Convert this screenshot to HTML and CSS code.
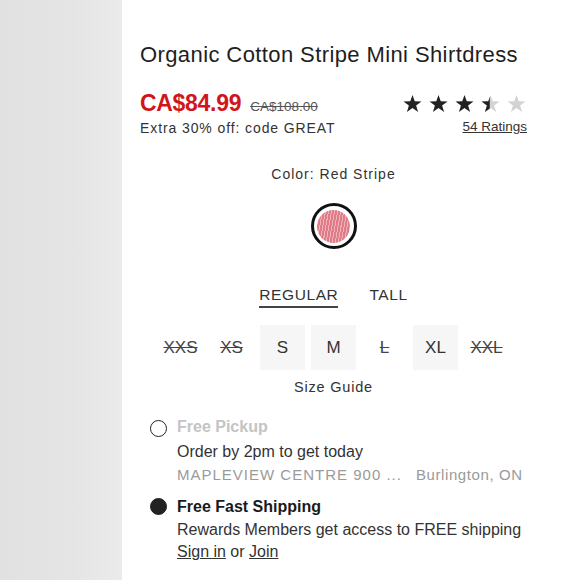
FILE: index.html
```html
<!DOCTYPE html>
<html lang="en">
<head>
<meta charset="utf-8">
<title>Organic Cotton Stripe Mini Shirtdress</title>
<link rel="stylesheet" href="styles.css">
</head>
<body>
<div class="page">
  <aside class="gallery"></aside>
  <main class="details">
    <h1 class="title">Organic Cotton Stripe Mini Shirtdress</h1>
    <div class="price-row">
      <div class="prices">
        <div class="price-line">
          <span class="price">CA$84.99</span>
          <span class="was">CA$108.00</span>
        </div>
        <div class="promo">Extra 30% off: code GREAT</div>
      </div>
      <div class="rating">
        <div class="stars">
          <svg width="124" height="20" viewBox="0 0 124 20">
            <defs>
              <path id="st" d="M9.5 1 L11.75 7.3 L18.5 7.4 L13.1 11.5 L15.1 18 L9.5 14.1 L3.9 18 L5.9 11.5 L0.5 7.4 L7.25 7.3 Z"/>
              <clipPath id="half"><rect x="0" y="0" width="8.8" height="20"/></clipPath>
            </defs>
            <use href="#st" x="0" fill="#222"/>
            <use href="#st" x="26" fill="#222"/>
            <use href="#st" x="52" fill="#222"/>
            <use href="#st" x="78" fill="#d3d3d3"/>
            <g transform="translate(78 0)"><use href="#st" fill="#222" clip-path="url(#half)"/></g>
            <use href="#st" x="104" fill="#d3d3d3"/>
          </svg>
        </div>
        <a class="ratings-link" href="#">54 Ratings</a>
      </div>
    </div>

    <div class="color-label">Color: Red Stripe</div>
    <div class="swatch-wrap">
      <span class="swatch"><span class="swatch-fill"></span></span>
    </div>

    <div class="fits">
      <span class="fit active">REGULAR</span>
      <span class="fit">TALL</span>
    </div>

    <div class="sizes">
      <span class="size na">XXS</span>
      <span class="size na">XS</span>
      <span class="size avail">S</span>
      <span class="size avail">M</span>
      <span class="size na">L</span>
      <span class="size avail">XL</span>
      <span class="size na">XXL</span>
    </div>
    <div class="size-guide">Size Guide</div>

    <div class="options">
      <div class="option">
        <span class="radio"></span>
        <div class="option-text">
          <div class="opt-title disabled">Free Pickup</div>
          <div class="opt-line">Order by 2pm to get today</div>
          <div class="opt-store"><span>MAPLEVIEW CENTRE 900 ...</span><span>Burlington, ON</span></div>
        </div>
      </div>
      <div class="option">
        <span class="radio checked"></span>
        <div class="option-text">
          <div class="opt-title">Free Fast Shipping</div>
          <div class="opt-line">Rewards Members get access to FREE shipping</div>
          <div class="opt-line"><a href="#">Sign in</a> or <a href="#">Join</a></div>
        </div>
      </div>
    </div>
  </main>
</div>
</body>
</html>
```

FILE: styles.css
```css
* { box-sizing: border-box; }
html, body { margin: 0; padding: 0; background: #fff; }
body {
  font-family: "Liberation Sans", Arial, sans-serif;
  color: #222;
  width: 580px;
  height: 580px;
  overflow: hidden;
}
.page {
  display: flex;
  height: 580px;
}
.gallery {
  width: 122px;
  flex: none;
  background: linear-gradient(90deg, #e1e1e1 0%, #e5e5e5 60%, #ebebeb 100%);
}
.details {
  flex: 1;
  padding: 41px 53px 0 18px;
}
.title {
  margin: 0;
  font-size: 22px;
  font-weight: normal;
  line-height: 28px;
  color: #1e1e1e;
  letter-spacing: 0.4px;
}
.price-row {
  display: flex;
  justify-content: space-between;
  margin-top: 21px;
}
.price-line {
  display: flex;
  align-items: baseline;
  gap: 9px;
  height: 27px;
}
.price {
  color: #d0161c;
  font-weight: bold;
  font-size: 23px;
  line-height: 27px;
  letter-spacing: -0.3px;
}
.was {
  color: #555;
  font-size: 13.5px;
  text-decoration: line-through;
}
.promo {
  font-size: 14px;
  line-height: 18px;
  color: #333;
  letter-spacing: 0.9px;
  margin-top: 2px;
}
.rating {
  display: flex;
  flex-direction: column;
  align-items: flex-end;
}
.stars {
  height: 24px;
  padding-top: 4px;
}
.stars svg { display: block; }
.ratings-link {
  margin-top: 4px;
  font-size: 13.5px;
  line-height: 18px;
  color: #333;
  text-decoration: underline;
}
.color-label {
  text-align: center;
  margin-top: 28px;
  font-size: 14px;
  line-height: 18px;
  letter-spacing: 1px;
  color: #333;
}
.swatch-wrap {
  display: flex;
  justify-content: center;
  margin-top: 20px;
}
.swatch {
  width: 46px;
  height: 46px;
  border-radius: 50%;
  border: 3px solid #111;
  display: flex;
  align-items: center;
  justify-content: center;
}
.swatch-fill {
  width: 33px;
  height: 33px;
  border-radius: 50%;
  background:
    repeating-linear-gradient(100deg, #e07c88 0 2px, #f0b3ba 2px 3px);
}
.fits {
  display: flex;
  justify-content: center;
  gap: 31px;
  margin-top: 36px;
  font-size: 15.5px;
  line-height: 19px;
  letter-spacing: 0.6px;
  color: #333;
}
.fit { padding-bottom: 2px; border-bottom: 2px solid transparent; }
.fit.active { border-bottom-color: #444; }
.sizes {
  display: flex;
  justify-content: center;
  gap: 6px;
  margin-top: 17px;
}
.size {
  width: 45px;
  height: 45px;
  display: flex;
  align-items: center;
  justify-content: center;
  font-size: 17px;
  color: #333;
}
.size.avail { background: #f6f6f6; }
.size.na { text-decoration: line-through; color: #444; }
.size-guide {
  text-align: center;
  margin-top: 8px;
  font-size: 14.5px;
  line-height: 18px;
  letter-spacing: 0.8px;
  color: #333;
}
.options {
  margin-top: 20px;
  display: flex;
  flex-direction: column;
  gap: 10px;
}
.option {
  display: flex;
  gap: 10px;
}
.radio {
  flex: none;
  width: 17px;
  height: 17px;
  border-radius: 50%;
  border: 1.5px solid #222;
  margin-left: 10px;
  margin-top: 4px;
}
.radio.checked { background: #222; border-color: #222; margin-top: 2px; }
.option-text {
  font-size: 16px;
  line-height: 22.5px;
  color: #333;
}
.opt-title {
  font-weight: bold;
  color: #1a1a1a;
}
.opt-title.disabled { color: #c4c4c4; margin-bottom: 2.5px; }
.opt-store {
  display: flex;
  gap: 14px;
  color: #9a9a9a;
  letter-spacing: 1px;
  font-size: 15px;
}
.opt-store span:last-child { letter-spacing: 0.6px; }
.opt-line a { color: #333; }
```
